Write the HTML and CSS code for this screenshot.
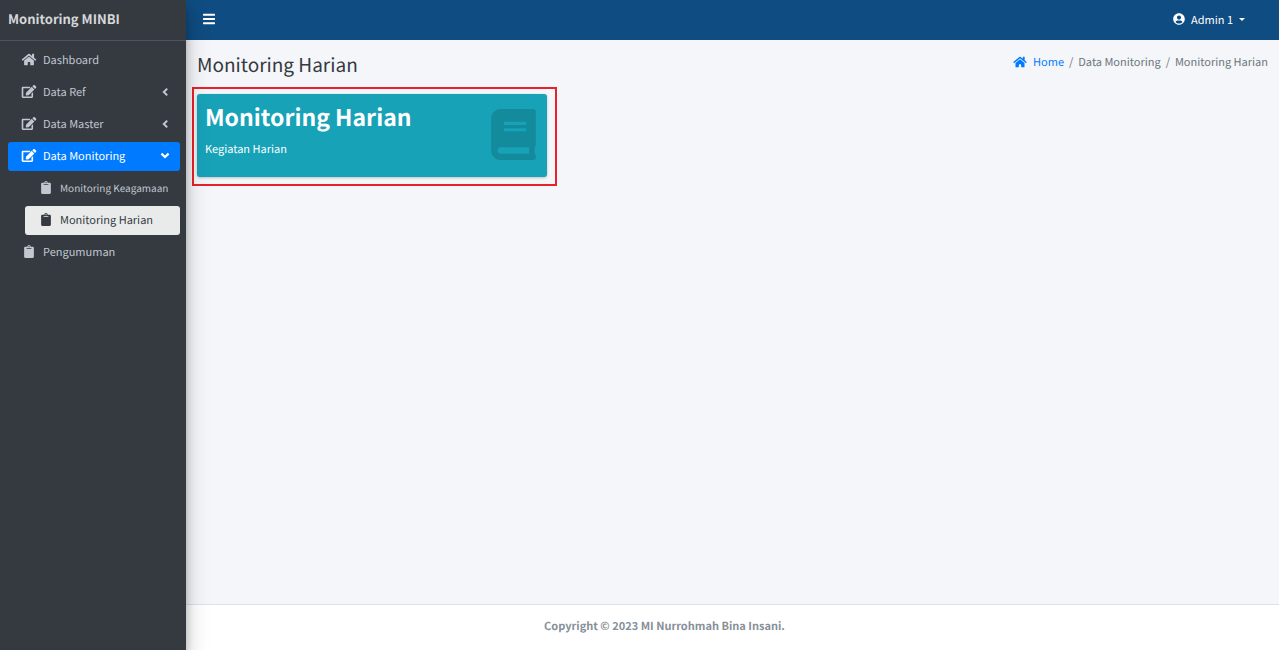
FILE: index.html
```html
<!DOCTYPE html>
<html lang="id">
<head>
<meta charset="utf-8">
<meta name="viewport" content="width=device-width, initial-scale=1">
<title>Monitoring Harian</title>
<link rel="stylesheet" href="styles.css">
</head>
<body>
<svg class="sprite" aria-hidden="true">
  <symbol id="home" viewBox="0 0 576 512"><path d="M280.37 148.26L96 300.11V464a16 16 0 0 0 16 16l112.06-.29a16 16 0 0 0 15.92-16V368a16 16 0 0 1 16-16h64a16 16 0 0 1 16 16v95.64a16 16 0 0 0 16 16.05L464 480a16 16 0 0 0 16-16V300L295.67 148.26a12.19 12.19 0 0 0-15.3 0zM571.6 251.47L488 182.56V44.05a12 12 0 0 0-12-12h-56a12 12 0 0 0-12 12v72.61L318.47 43a48 48 0 0 0-61 0L4.34 251.47a12 12 0 0 0-1.6 16.9l25.5 31A12 12 0 0 0 45.15 301l235.22-193.74a12.19 12.19 0 0 1 15.3 0L530.9 301a12 12 0 0 0 16.9-1.6l25.5-31a12 12 0 0 0-1.7-16.93z"/></symbol>
  <symbol id="edit" viewBox="0 0 576 512"><path d="M402.6 83.2l90.2 90.2c3.8 3.8 3.8 10 0 13.8L274.4 405.6l-92.8 10.3c-12.4 1.4-22.9-9.1-21.5-21.5l10.3-92.8L388.8 83.2c3.8-3.8 10-3.8 13.8 0zm162-22.9l-48.8-48.8c-15.2-15.2-39.9-15.2-55.2 0l-35.4 35.4c-3.8 3.8-3.8 10 0 13.8l90.2 90.2c3.8 3.8 10 3.8 13.8 0l35.4-35.4c15.2-15.3 15.2-40 0-55.2zM384 346.2V448H64V128h229.8c3.2 0 6.2-1.3 8.5-3.5l40-40c7.6-7.6 2.2-20.5-8.5-20.5H48C21.5 64 0 85.5 0 112v352c0 26.5 21.5 48 48 48h352c26.5 0 48-21.5 48-48V306.2c0-10.7-12.9-16-20.5-8.5l-40 40c-2.2 2.3-3.5 5.3-3.5 8.5z"/></symbol>
  <symbol id="clipboard" viewBox="0 0 384 512"><path d="M384 112v352c0 26.51-21.49 48-48 48H48c-26.51 0-48-21.49-48-48V112c0-26.51 21.49-48 48-48h80c0-35.29 28.71-64 64-64s64 28.71 64 64h80c26.51 0 48 21.49 48 48zM192 40c-13.255 0-24 10.745-24 24s10.745 24 24 24 24-10.745 24-24-10.745-24-24-24m96 114v-20a6 6 0 0 0-6-6H102a6 6 0 0 0-6 6v20a6 6 0 0 0 6 6h180a6 6 0 0 0 6-6z"/></symbol>
  <symbol id="book" viewBox="0 0 448 512"><path d="M448 360V24c0-13.3-10.7-24-24-24H96C43 0 0 43 0 96v320c0 53 43 96 96 96h328c13.3 0 24-10.7 24-24v-16c0-7.5-3.5-14.3-8.9-18.7-4.2-15.4-4.2-59.3 0-74.7 5.4-4.3 8.9-11.1 8.9-18.6zM128 134c0-3.3 2.7-6 6-6h212c3.3 0 6 2.7 6 6v20c0 3.3-2.7 6-6 6H134c-3.3 0-6-2.7-6-6v-20zm0 64c0-3.3 2.7-6 6-6h212c3.3 0 6 2.7 6 6v20c0 3.3-2.7 6-6 6H134c-3.3 0-6-2.7-6-6v-20zm253.4 250H96c-17.7 0-32-14.3-32-32 0-17.6 14.4-32 32-32h285.4c-1.9 17.1-1.9 46.9 0 64z"/></symbol>
  <symbol id="user" viewBox="0 0 496 512"><path d="M248 8C111 8 0 119 0 256s111 248 248 248 248-111 248-248S385 8 248 8zm0 96c48.6 0 88 39.4 88 88s-39.4 88-88 88-88-39.4-88-88 39.4-88 88-88zm0 344c-58.7 0-111.3-26.6-146.5-68.2 18.8-35.4 55.6-59.8 98.5-59.8 2.4 0 4.8.4 7.1 1.1 13 4.2 26.6 6.9 40.9 6.9 14.3 0 28-2.7 40.9-6.9 2.3-.7 4.7-1.1 7.1-1.1 42.9 0 79.7 24.4 98.5 59.8C359.3 421.4 306.7 448 248 448z"/></symbol>
  <symbol id="bars" viewBox="0 0 448 512"><path d="M16 132h416a16 16 0 0 0 16-16V76a16 16 0 0 0-16-16H16A16 16 0 0 0 0 76v40a16 16 0 0 0 16 16zm0 160h416a16 16 0 0 0 16-16v-40a16 16 0 0 0-16-16H16a16 16 0 0 0-16 16v40a16 16 0 0 0 16 16zm0 160h416a16 16 0 0 0 16-16v-40a16 16 0 0 0-16-16H16a16 16 0 0 0-16 16v40a16 16 0 0 0 16 16z"/></symbol>
  <symbol id="angle-left" viewBox="0 0 10 10"><path d="M7.2 1.6 3.8 5l3.4 3.4" fill="none" stroke="currentColor" stroke-width="2"/></symbol>
  <symbol id="angle-down" viewBox="0 0 10 10"><path d="M1.4 2.6 5 6l3.6-3.4" fill="none" stroke="currentColor" stroke-width="2.2"/></symbol>
</svg>
<div class="app">
  <aside class="sidebar">
    <a class="brand" href="#">Monitoring MINBI</a>
    <nav class="menu">
      <a class="item" href="#"><svg class="icon"><use href="#home"/></svg><span class="label">Dashboard</span></a>
      <a class="item" href="#"><svg class="icon"><use href="#edit"/></svg><span class="label">Data Ref</span><svg class="arrow"><use href="#angle-left"/></svg></a>
      <a class="item" href="#"><svg class="icon"><use href="#edit"/></svg><span class="label">Data Master</span><svg class="arrow"><use href="#angle-left"/></svg></a>
      <a class="item open" href="#"><svg class="icon"><use href="#edit"/></svg><span class="label">Data Monitoring</span><svg class="arrow"><use href="#angle-down"/></svg></a>
      <div class="submenu">
        <a class="item compact" href="#"><svg class="icon"><use href="#clipboard"/></svg><span class="label">Monitoring Keagamaan</span></a>
        <a class="item current" href="#" aria-current="page"><svg class="icon"><use href="#clipboard"/></svg><span class="label">Monitoring Harian</span></a>
      </div>
      <a class="item" href="#"><svg class="icon"><use href="#clipboard"/></svg><span class="label">Pengumuman</span></a>
    </nav>
  </aside>
  <div class="page">
    <header class="topbar">
      <button class="toggle" type="button" aria-label="Menu"><svg class="icon"><use href="#bars"/></svg></button>
      <button class="account" type="button"><svg class="icon"><use href="#user"/></svg><span>Admin 1</span><span class="caret"></span></button>
    </header>
    <main class="content">
      <div class="heading">
        <h1 class="title">Monitoring Harian</h1>
        <nav class="crumbs" aria-label="Breadcrumb">
          <a class="home" href="#"><svg class="icon"><use href="#home"/></svg>Home</a>
          <span>/</span><span>Data Monitoring</span><span>/</span><span>Monitoring Harian</span>
        </nav>
      </div>
      <div class="grid">
        <div class="highlight">
          <a class="card" href="#">
            <div class="card-text">
              <h2 class="card-title">Monitoring Harian</h2>
              <p class="card-note">Kegiatan Harian</p>
            </div>
            <svg class="card-icon"><use href="#book"/></svg>
          </a>
        </div>
      </div>
    </main>
    <footer class="footer">Copyright © 2023 MI Nurrohmah Bina Insani.</footer>
  </div>
</div>
</body>
</html>
```
FILE: styles.css
```css
* { box-sizing: border-box; }
body {
  margin: 0;
  font: 11px/16px "Noto Sans CJK SC", "Noto Sans", sans-serif;
  color: #212529;
  text-rendering: geometricPrecision;
}
a { color: inherit; text-decoration: none; }
button { border: 0; background: none; padding: 0; font: inherit; color: inherit; }
h1, h2, p { margin: 0; }
svg { fill: currentColor; flex: none; }
.sprite { display: none; }
.app { display: flex; min-height: 100vh; }

.sidebar {
  width: 186px;
  flex: none;
  z-index: 1;
  background: #343a40;
  color: #c2c7d0;
  box-shadow: 0 11px 22px rgba(0, 0, 0, .22), 0 8px 8px rgba(0, 0, 0, .22);
}
.brand {
  display: flex;
  align-items: center;
  height: 41px;
  padding: 0 8px 2px;
  border-bottom: 1px solid #4b545c;
  font-size: 13px;
  font-weight: 700;
  color: #d6d8d9;
}
.menu { display: flex; flex-direction: column; gap: 3px; padding: 5px 6px 5px 8px; }
.submenu { display: flex; flex-direction: column; gap: 3px; padding-left: 17px; }
.item {
  display: flex;
  align-items: center;
  gap: 6px;
  height: 29px;
  padding: 0 10px 1px 13px;
  border-radius: 3px;
  white-space: nowrap;
}
.item .icon { width: 16px; height: 13px; margin-bottom: 2px; }
.label { flex: 1; }
.submenu .item { padding-right: 0; }
.compact { font-size: 10px; }
.arrow { width: 10px; height: 10px; }
.open { background: #007bff; color: #fff; }
.current { background: #e9ebeb; color: #343a40; }

.page { flex: 1; min-width: 0; display: flex; flex-direction: column; background: #f4f6f9; }
.topbar {
  display: flex;
  align-items: center;
  justify-content: space-between;
  height: 40px;
  padding: 0 34px 2px 17px;
  background: #0f4c81;
  color: #fff;
}
.toggle { display: flex; }
.toggle .icon { width: 12px; height: 14px; }
.account { display: flex; align-items: center; gap: 6px; }
.account .icon { width: 12px; height: 12px; }
.caret { border: 3px solid transparent; border-top-color: currentColor; border-bottom: 0; }

.content { flex: 1; }
.heading { display: flex; justify-content: space-between; padding: 13px 11px 10px; }
.title { font-size: 19px; line-height: 24px; font-weight: 400; color: #343a40; }
.crumbs { display: flex; align-items: center; gap: 5px; height: 18px; color: #6c757d; }
.home { display: flex; align-items: center; gap: 6px; color: #007bff; }
.home .icon { width: 14px; height: 12px; }
.grid { display: grid; grid-template-columns: 33.6% 1fr; padding: 0 0 0 6px; }
.highlight { border: 2px solid #e8222b; padding: 5px 8px 7px 3px; }
.card {
  display: flex;
  justify-content: space-between;
  min-height: 83px;
  padding: 7px 11px 8px 8px;
  border-radius: 3px;
  background: #17a2b8;
  color: #fff;
  box-shadow: 0 0 1px rgba(0, 0, 0, .13), 0 1px 3px rgba(0, 0, 0, .2);
}
.card-title { font-size: 23px; line-height: 30px; font-weight: 700; }
.card-note { padding-top: 10px; }
.card-icon { width: 45px; height: 51px; margin-top: 8px; color: #148a9d; }

.footer {
  padding: 13px 148px 16px 12px;
  border-top: 1px solid #dee2e6;
  background: #fff;
  color: #869099;
  font-weight: 700;
  text-align: center;
}
```
